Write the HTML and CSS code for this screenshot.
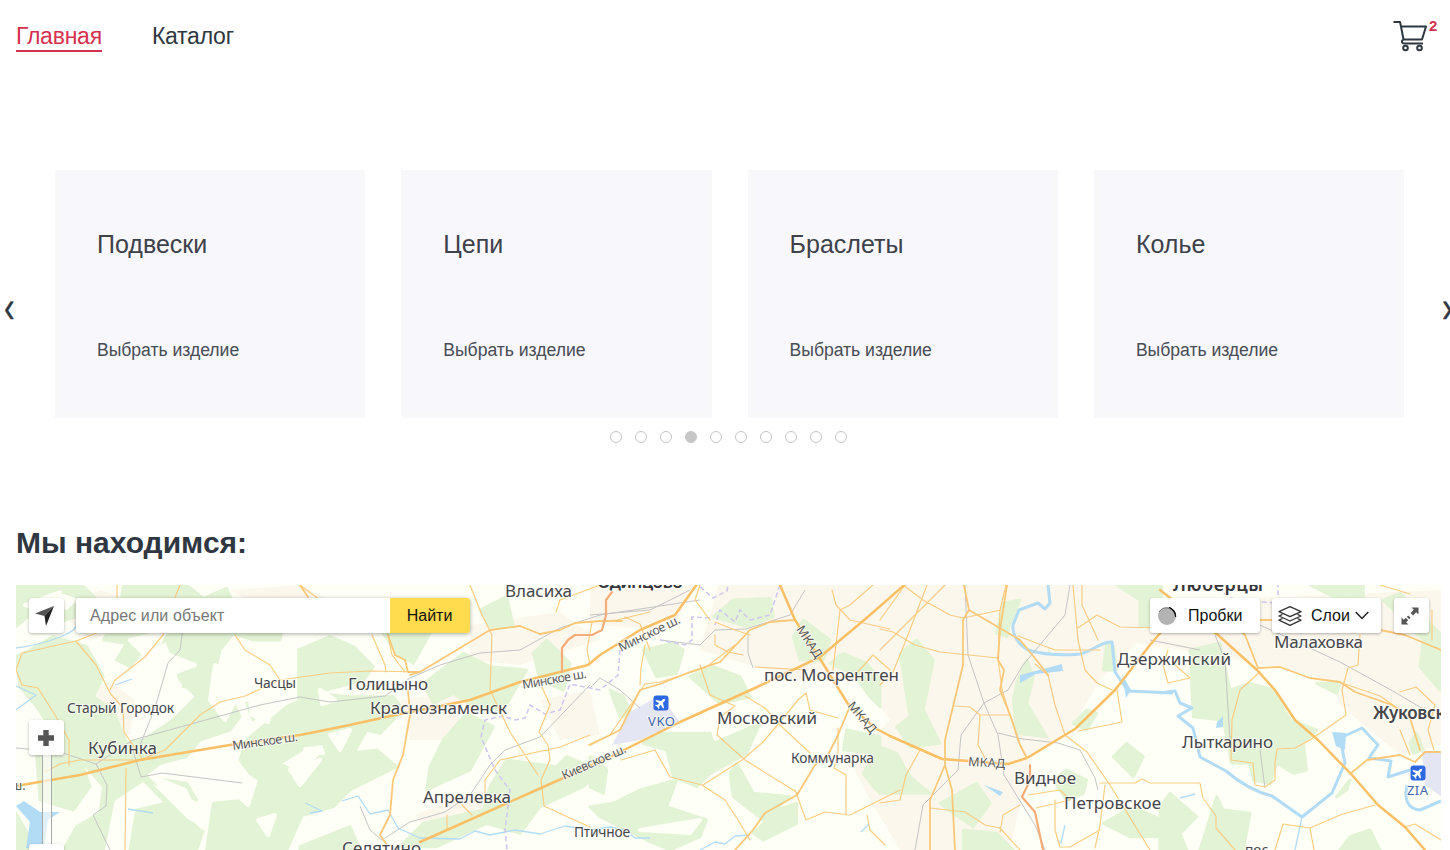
FILE: index.html
```html
<!DOCTYPE html>
<html lang="ru">
<head>
<meta charset="utf-8">
<title>Главная</title>
<link rel="stylesheet" href="styles.css">
</head>
<body>
<header class="header">
  <nav class="nav">
    <a class="nav-link active">Главная</a>
    <a class="nav-link">Каталог</a>
  </nav>
  <a class="cart">
    <svg width="36" height="32" viewBox="0 0 36 32" fill="none" stroke="#2f3742" stroke-width="2" stroke-linejoin="round"><path d="M.5 2H7l1 4.500L10.500 19.500H29L33 6.500H8M10.500 19.500C8 20.500 8.500 23.500 11 23.500H30"/><circle cx="12.500" cy="28" r="2.300"/><circle cx="26.500" cy="28" r="2.300"/></svg>
    <span class="cart-count">2</span>
  </a>
</header>

<section class="slider">
  <span class="arrow"><span class="arrow-glyph">‹</span></span>
  <div class="cards">
    <article class="card"><h3 class="card-title">Подвески</h3><a class="card-link">Выбрать изделие</a></article>
    <article class="card"><h3 class="card-title">Цепи</h3><a class="card-link">Выбрать изделие</a></article>
    <article class="card"><h3 class="card-title">Браслеты</h3><a class="card-link">Выбрать изделие</a></article>
    <article class="card"><h3 class="card-title">Колье</h3><a class="card-link">Выбрать изделие</a></article>
  </div>
  <span class="arrow"><span class="arrow-glyph">›</span></span>
</section>
<div class="dots">
  <i class="dot"></i><i class="dot"></i><i class="dot"></i><i class="dot on"></i><i class="dot"></i><i class="dot"></i><i class="dot"></i><i class="dot"></i><i class="dot"></i><i class="dot"></i>
</div>

<h2 class="heading">Мы находимся:</h2>

<section class="map">
<svg class="map-canvas" width="1425" height="265" viewBox="16 585 1425 265">
  <rect class="land" x="16" y="585" width="1425" height="265"/>
  <!-- built-up areas -->
  <g class="urban">
    <path d="M60 612L100 590L135 600L130 625L90 640ZM75 690L110 682L135 700L130 735L80 745L60 720ZM230 590L300 585L330 600L290 625ZM400 700L470 690L450 740L410 740ZM470 625L560 612L600 640L520 665L470 660ZM415 815L480 790L500 805L430 835ZM540 700L590 690L600 735L560 740ZM590 580H700L670 630L590 625ZM700 650L720 580L1150 580L1140 640L1100 680L1070 730L1030 760L1010 850H900L870 800L850 760L890 720L860 680L800 680ZM1120 640L1210 600L1441 590V745L1400 755L1340 705L1330 680L1240 660L1180 650Z"/>
  </g>
  <!-- forests and parks -->
  <g class="green">
    <g transform="translate(0 510) scale(.33333)">
      <path d="M48 225H245L285 262L230 320L150 345L95 310L48 350ZM370 225H560L610 265L680 235L720 330L860 300L840 390L760 390L700 370L660 420L640 510L690 560L720 620L690 660L600 690L560 740L480 760L430 800L560 820L590 870L540 850L440 810L560 930L610 960L590 1020H390L410 900L500 880L430 810L340 870L310 1020H190L230 950L300 910L310 830L260 770L200 740L150 650L110 590L60 530L48 440L90 420L160 380L260 410L310 500L280 560L340 600L380 700L430 690L520 630L590 560L540 510L500 390L430 420L390 470L350 450L380 400L310 390L360 300Z"/>
      <path d="M600 380L560 400L550 530L620 540L590 620L680 650L700 610L660 560L650 460ZM720 750L740 690L860 590L905 570V720L840 760L905 800V920L860 1020H620L640 880L740 870L780 810L750 790ZM48 910L110 1020H48ZM110 740H240L270 830L220 900L120 870ZM740 580L800 560L760 630Z"/>
    </g>
    <g transform="translate(300 580) scale(.33333)">
      <path d="M-4 210L90 170L160 200L220 260L190 300L40 340L150 350L280 350L310 390L240 460L200 450L150 540L90 550L70 490L-4 500ZM250 160H390L340 250L290 220ZM370 310L490 220L570 260L680 270L610 390L520 380L460 340L400 370ZM60 530L230 510L290 560L150 630L100 680L-4 710V590ZM430 480L500 400L580 440L510 570L380 630L390 560ZM570 620L620 540L770 560L800 530L900 570L850 620L720 680L660 760L560 730L410 800H300L370 730L550 690ZM700 220L740 180L810 250L790 330L720 300ZM540 90L620 50L640 140L570 140ZM0 800L150 740L180 810H0Z"/>
    </g>
    <g transform="translate(590 580) scale(.33333)">
      <path d="M370 110L430 60L540 55L550 110L470 140ZM160 210L250 190L280 210L260 280L200 290ZM300 290L370 260L450 290L480 350L390 370ZM210 460L360 460L370 490L510 430L470 520L360 580L320 620L250 590L230 510L160 490ZM420 580L440 550L490 640L600 650L520 720L430 650ZM0 680L70 670L150 630L260 600L230 680L350 720L330 770L240 810L170 780L30 710ZM610 170L640 120L720 180L700 240L630 240ZM720 250L760 220L830 250L870 300V380L840 350L790 280ZM770 450L870 470L870 520L760 510ZM820 580L870 500V640L850 620ZM60 330L100 350L130 410L90 410ZM0 530L50 570L40 640L0 620ZM560 690L620 670L620 730L520 780L490 760Z"/>
    </g>
    <g transform="translate(880 580) scale(.33333)">
      <path d="M60 220L110 180L160 240L130 390L180 490L90 500L50 440L90 410ZM370 70L420 60L390 130L380 170L350 160ZM410 310L440 240L460 290L440 370L500 470L410 460L400 360ZM180 670L290 610L330 670L280 740L220 700ZM0 500L50 520L90 590L150 640L0 640ZM740 490L790 530L760 590L700 530ZM620 390L650 400L620 450L580 430ZM520 600L560 570L620 600L610 640L560 660ZM670 730L760 680L845 720V770L750 770ZM680 190L700 200L710 270L670 270ZM710 15H845V140H780V60ZM250 750L350 760L400 810H250Z"/>
    </g>
    <g transform="translate(1160 580) scale(.33333)">
      <path d="M0 60H50V150H0ZM90 210L180 190L210 330L270 310L340 330L390 420L470 450L430 490L440 570L400 580L350 550L330 610L280 600L270 550H215L190 420L100 410ZM450 15H610V50L540 60ZM670 60L720 40L840 160V330L780 260L790 180L720 110ZM470 310L540 310L530 340ZM0 680L30 640L110 710L60 760L80 810H0ZM170 650L190 690L270 700L250 810H120ZM570 770L630 750L660 810H540ZM750 490L770 460L790 510L760 520ZM530 650L570 600L560 630Z"/>
    </g>
  </g>
  <!-- clearings inside forests -->
  <g class="glade">
    <path d="M25 605L60 592L50 612ZM130 640L165 632L150 660ZM215 665L245 680L225 720L210 700ZM150 775L185 790L203 828L180 805ZM330 735L350 730L340 750ZM380 745L400 740L395 755ZM235 640L265 655L250 665ZM640 830L700 820L690 833ZM290 770L320 760L300 785ZM250 700L275 690L268 722L252 715ZM232 790L255 783L248 805ZM60 595L75 600L66 608ZM320 690L335 700L322 704ZM258 820L275 815L268 835ZM170 655L195 665L176 672Z"/>
  </g>
  <path class="airport" d="M612 745L630 712L655 698L668 706L680 722L640 740ZM1422 752H1441V796L1425 785Z"/>
  <!-- rivers and ponds -->
  <path class="lake" d="M16 806L24 801L40 812H60L48 820L44 848H26L30 822ZM1332 732L1346 733L1345 750L1336 746ZM1217 722L1223 716V727L1216 728ZM1020 675L1062 664L1063 671L1036 674L1020 683ZM1122 674L1131 690L1126 698ZM984 785L1003 792L1000 796Z"/>
  <g class="river thin">
    <path d="M16 648Q40 645 60 637T76 622M16 686L36 695L16 710M115 685L132 679M128 809L153 813M305 803L322 811L310 813M342 801L358 796L370 814L388 810L398 828L420 838L460 839L475 831L490 835L515 830L540 834L565 826L590 830L610 827L625 830L635 838L650 838M700 850L715 842L725 844L735 836L750 835"/>
    <path d="M1302 817L1295 850M1065 825L1061 843L1057 840M1180 798L1195 794M861 832L869 824"/>
  </g>
  <g class="river">
    <path d="M1048 585L1050 603L1045 609L1038 603L1019 610L1013 625Q1012 640 1028 650C1045 655 1060 656 1080 654C1095 650 1102 641 1112 642L1115 672L1128 691L1173 693M1160 693L1175 691L1180 703L1192 708L1178 716L1193 728L1200 757L1226 771Q1248 790 1272 796L1302 817L1332 793L1345 763L1340 738L1362 728L1378 745L1369 758L1391 761L1388 777L1410 770"/>
    <path d="M1407 785Q1402 808 1420 810L1441 801"/>
  </g>
  <!-- railways -->
  <g class="rail">
    <path d="M183 628L180 650L168 663L155 708L140 745M16 748L60 752L96 764L133 740L260 705L300 697M130 740L141 777L162 773L242 783M96 764L107 785L106 806L93 815L110 850M300 697L330 702L385 696L410 678L440 665L480 653L520 650L560 628L600 615L700 600M360 806L370 830L382 840L410 822L445 812L470 795L490 765L505 750L540 737L590 685"/>
    <path d="M590 688L600 678L620 690L640 708M590 615L650 610L690 590M660 640L700 645L715 630L746 629L790 615L805 590M748 630V653L753 668M965 585L968 655L984 703L1008 690L1023 665L1065 615L1070 585M984 703L961 735L958 770L923 805L915 850M984 703L998 735L1004 775L1035 825L1045 850M998 733L1023 739L1058 743L1080 750L1095 778L1098 790M1215 635L1225 660L1230 740M1260 625L1340 662L1391 690L1425 710M1150 640L1200 650M1260 750L1265 788"/>
  </g>
  <path class="border-line" d="M700 587L713 598L727 591L728 585M780 585L770 615L750 620L740 610L735 622L720 610L715 625M710 618L692 617V640L685 645L660 640M620 650L618 675L600 690L570 684L560 710L545 714L530 705L525 718L515 720L503 716L485 720L481 737L495 770L510 790L505 830L507 850M1210 585L1235 600L1278 603V585"/>
  <!-- secondary roads -->
  <g class="road minor">
    <path d="M117 585V625L76 641L22 653L16 670L22 685L38 688L55 715L69 740L69 765M76 641L96 665L110 693L123 708L124 732L143 760M110 690L115 680L145 657L163 635L170 610L180 585M235 635L245 650L270 665L280 680L245 696L220 702L200 715L190 725L165 750L140 760H80L60 764L45 772M126 768L125 850M280 680L330 673L370 671L420 672M300 585L320 600M372 635L385 665L386 672M388 635L392 655L405 672M470 585L482 615L492 635L490 690L510 732L538 775M590 735L560 747L500 760L485 780V800M541 685L550 705L539 732L548 745L550 760L541 780L544 806L570 818L590 827M447 815V830M600 585L560 600L556 612M590 665L587 650L592 622M462 805L472 815"/>
    <path d="M640 685L641 668L645 645M588 745L610 735L645 684L660 682L705 668L735 645M715 622L735 630L750 635M625 617L640 624L650 650M700 665L710 695L735 706L720 717L717 735L745 760L798 793M745 696L765 708L780 725L810 753M703 785L742 760L762 743L775 728L798 700L806 693L810 710L838 718M700 585L695 600L710 620M590 622L617 620L650 612M621 760L655 750L670 777L702 785L725 800L738 820L750 840M715 635V645L728 652L743 655M755 667L806 670M832 590L836 605L850 620L890 629M833 670L840 610L850 605L873 585M855 675L873 655L890 670M795 790L806 820L825 812L850 815L880 800L900 790M838 728V754L834 768L846 775L846 815M867 815L870 830L885 845"/>
    <path d="M880 629L893 632L915 645L940 652L998 658L1000 610L1006 585M905 585L880 620M945 585L880 650M880 685L893 672L906 640L927 585M903 585L923 600L950 615L963 618L1001 610M998 658L1002 690L1018 740L1025 755M955 706L970 707L980 715L1010 715M980 715L978 745L985 758M1018 636L1055 650L1100 650M1035 664L1048 675L1055 705L1065 735L1087 752L1110 785L1150 850M1073 585L1078 640L1085 670L1097 683L1112 690M1082 585V605L1098 640M1078 628L1097 615L1120 627L1160 628M1117 690L1122 722L1078 731M1028 795L1060 790L1070 800L1036 808M1100 783H1135L1142 779L1150 783H1200L1203 798L1216 816V828L1235 850M1105 785L1100 825L1095 848M930 808L965 812L985 825L1000 828L1020 850M920 750L906 775L900 800L880 803M1000 832L1003 815L1020 805M1055 800V830L1060 847L1070 847L1100 830"/>
    <path d="M1168 650L1163 665L1168 683L1190 678L1175 665M1260 672L1240 690L1232 720L1231 760L1253 763L1255 785L1265 787L1275 780V763L1277 749L1295 748L1310 740L1346 715L1342 690L1348 668L1358 665L1360 635M1342 683L1380 696L1400 710M1400 730L1410 755M1432 610L1432 640M1400 692L1416 687L1435 705L1428 730L1434 750M1375 805L1340 815L1310 828L1283 824L1275 850M1310 828L1314 850M1380 585L1410 594M1405 827L1415 824L1441 840"/>
  </g>
  <!-- trunk roads -->
  <g class="road major">
    <path class="highway" d="M16 786L80 775L140 760L230 745L300 735L345 726L400 714L470 700L520 682L588 665L600 655L640 630L675 615L700 580M420 842L447 830L541 788L610 757L680 722L755 688L820 657L870 615L910 580"/>
    <path d="M408 690L410 715L403 755L393 780L390 815L380 835L387 845M410 675L420 672L490 630L520 626L540 634L560 630L575 623L600 621L622 621M300 585L308 597M388 635L395 655L405 660L408 672L420 672M590 745L620 730L640 690L660 684L690 672L720 662L750 630L770 622L795 620"/>
    <path class="highway" d="M780 585L795 620L822 662L848 704L875 728L890 736L942 759L1008 764L1027 758L1075 729L1115 690L1150 645L1180 610"/>
    <path d="M850 706L838 735L828 755L815 765L797 795L765 813L753 830L735 850M964 585L969 610L963 620V665L945 740L945 765L930 800V850M969 610L1020 640L1038 662L1048 675M945 765L952 790L955 850M1007 585L1000 630L998 660L1004 670L1000 690L1012 720L1020 745L1027 758"/>
    <path class="highway" d="M1160 590L1218 635L1257 670L1275 690L1295 720L1318 740L1352 775L1378 805L1405 827L1425 850"/>
    <path d="M1350 774L1367 760L1400 755L1415 762L1425 752L1441 752M1218 610L1245 635L1258 668L1280 667L1310 678L1340 682L1355 692L1392 705L1410 718L1420 750M1240 620L1290 620M1380 630L1405 635L1441 650"/>
  </g>
  <path class="road orange" d="M562 672V648L568 640L575 635H592L602 630L606 615V600L612 592M1030 765V780L1022 797L1035 812L1043 850"/>
  <!-- place names -->
  <g class="labels">
    <text x="505" y="597" textLength="67">Власиха</text>
    <text class="town" x="597" y="588" textLength="86">Одинцово</text>
    <text class="town" x="1173" y="591" textLength="90">Люберцы</text>
    <text class="small" x="254" y="688" textLength="42">Часцы</text>
    <text x="348" y="690" textLength="80">Голицыно</text>
    <text x="370" y="714" textLength="137">Краснознаменск</text>
    <text class="small" x="67" y="713" textLength="107">Старый Городок</text>
    <text x="88" y="754" textLength="69">Кубинка</text>
    <text x="423" y="803" textLength="88">Апрелевка</text>
    <text x="342" y="854" textLength="79">Селятино</text>
    <text class="small" x="574" y="837" textLength="56">Птичное</text>
    <text x="717" y="724" textLength="100">Московский</text>
    <text x="764" y="681" textLength="135">пос. Мосрентген</text>
    <text class="small" x="791" y="763" textLength="83">Коммунарка</text>
    <text x="1014" y="784" textLength="62">Видное</text>
    <text x="1064" y="809" textLength="97">Петровское</text>
    <text x="1117" y="665" textLength="114">Дзержинский</text>
    <text x="1274" y="648" textLength="89">Малаховка</text>
    <text x="1182" y="748" textLength="91">Лыткарино</text>
    <text class="zhuk" x="1373" y="719" textLength="94">Жуковский</text>
    <text class="small" x="1245" y="855">пос.</text>
    <text class="street" x="11" y="790">ш.</text>
    <text class="street" transform="translate(233 750) rotate(-8)" textLength="66">Минское ш.</text>
    <text class="street" transform="translate(523 689) rotate(-10)" textLength="65">Минское ш.</text>
    <text class="street" transform="translate(621 652) rotate(-26)" textLength="67">Минское ш.</text>
    <text class="street" transform="translate(564 780) rotate(-24)" textLength="69">Киевское ш.</text>
    <text class="street" transform="translate(796 629) rotate(57)" textLength="36">МКАД</text>
    <text class="street" transform="translate(847 706) rotate(50)" textLength="37">МКАД</text>
    <text class="street" transform="translate(968 766) rotate(3)" textLength="37">МКАД</text>
    <text class="code" x="648" y="726" textLength="27">VKO</text>
    <text class="code" x="1407" y="795" textLength="21">ZIA</text>
  </g>
  <g class="plane" transform="translate(661 703)"><rect x="-7.500" y="-7.500" width="15" height="15" rx="3"/><path transform="rotate(45)" d="M0-6L1.300-4V-1.500L5.500 1.300V2.500L1.300 1.500V4L3 5.300V6L0 5.300L-3 6V5.300L-1.300 4V1.500L-5.500 2.500V1.300L-1.300-1.500V-4Z"/></g>
  <g class="plane" transform="translate(1418 773)"><rect x="-7.500" y="-7.500" width="15" height="15" rx="3"/><path transform="rotate(45)" d="M0-6L1.300-4V-1.500L5.500 1.300V2.500L1.300 1.500V4L3 5.300V6L0 5.300L-3 6V5.300L-1.300 4V1.500L-5.500 2.500V1.300L-1.300-1.500V-4Z"/></g>
</svg>

<div class="controls">
  <span class="btn square locate"><svg width="20" height="20" viewBox="0 0 20 20"><path fill="#555" d="M19 0L0 7.500L9.500 10Z"/><path fill="#222" d="M19 0L9.500 10L11 20Z"/></svg></span>
  <div class="search"><span class="search-field">Адрес или объект</span><span class="search-btn">Найти</span></div>
  <span class="btn traffic"><svg width="20" height="20" viewBox="0 0 20 20"><circle cx="10" cy="10" r="9" fill="#b3b3b3"/><path d="M2 6A9 9 0 0 1 18.500 11" fill="none" stroke="#777" stroke-width="1"/><path d="M12 1.300A9 9 0 0 1 18.700 11Q18 5 12 1.300Z" fill="#111" stroke="#111"/></svg>Пробки</span>
  <span class="btn layers"><svg width="24" height="20" viewBox="0 0 24 20" fill="none" stroke="#333" stroke-width="1.300" stroke-linejoin="round"><path d="M12 .7L23 5.700L12 10.700L1 5.700ZM4.500 8.300L1 10L12 15L23 10L19.500 8.300M4.500 12.500L1 14.200L12 19.300L23 14.200L19.500 12.500"/></svg>Слои<svg class="chev" width="14" height="9" viewBox="0 0 14 9"><path d="M.7 1L7 7.500L13.300 1" fill="none" stroke="#222" stroke-width="1.500"/></svg></span>
  <span class="btn square expand"><svg width="18" height="18" viewBox="0 0 18 18" fill="#555"><path d="M10.500 .5H17.500V7.500L15.200 5.200L12 8.400L9.600 6L12.800 2.800ZM7.500 17.500H.5V10.500L2.800 12.800L4.800 10.800L7.200 13.200L5.200 15.200ZM5.800 9.800L7.200 8.400L9.600 10.800L8.200 12.200Z"/></svg></span>
</div>
<div class="zoom">
  <span class="btn square"><svg width="18" height="18" viewBox="0 0 18 18"><path d="M6.300 1h5.400v5.300H17v5.400h-5.300V17H6.300v-5.300H1V6.300h5.300Z" fill="#555"/></svg></span>
  <span class="track"></span>
  <span class="btn square"></span>
</div>
</section>
</body>
</html>
```

FILE: styles.css
```css
* { box-sizing: border-box; }
body {
  margin: 0;
  height: 850px;
  overflow: hidden;
  background: #fff;
  color: #2f3742;
  font-family: "Liberation Sans", Arial, sans-serif;
}
.header {
  display: flex;
  justify-content: space-between;
  height: 170px;
  padding: 20px 12px 0 16px;
}
.nav { display: flex; gap: 50px; align-items: flex-start; }
.nav-link {
  padding-top: 2px;
  font-size: 23px;
  line-height: 28px;
  letter-spacing: -.24px;
}
.nav-link.active {
  color: #d6304f;
  border-bottom: 2px solid #d6304f;
}
.cart { display: flex; align-items: flex-start; }
.cart-count {
  color: #d6304f;
  font-size: 15px;
  font-weight: bold;
  line-height: 12px;
  width: 9px;
}

.slider {
  display: flex;
  align-items: center;
  height: 248px;
  padding-left: 4px;
}
.arrow {
  flex: none;
  width: 51px;
  font-size: 32px;
  line-height: 32px;
}
.arrow-glyph {
  display: inline-block;
  transform: translateY(13px) scaleY(1.4);
  -webkit-text-stroke: .3px;
}
.cards { display: flex; flex: none; gap: 36px; width: 1387px; }
.card {
  width: 310.300px;
  height: 248px;
  padding: 53px 36px 0;
  border: 6px solid #f8f8fa;
  background: #f7f7fc;
}
.card-title {
  margin: 0 0 76px;
  font-size: 25px;
  font-weight: normal;
  line-height: 30px;
  color: #3d414a;
}
.card-link {
  display: block;
  font-size: 17.600px;
  line-height: 30px;
  letter-spacing: -.03px;
  color: #484c55;
}
.dots {
  display: flex;
  gap: 13px;
  padding: 13px 0 0 610px;
}
.dot {
  width: 12px;
  height: 12px;
  border: 1px solid #c6c6c6;
  border-radius: 50%;
}
.dot.on { background: #c6c6c6; }

.heading {
  margin: 82px 0 0 16px;
  height: 60px;
  font-size: 30px;
  line-height: 35px;
}

.map {
  position: relative;
  width: 1425px;
  height: 265px;
  margin-left: 16px;
  overflow: hidden;
}
.map-canvas { display: block; }
.land { fill: #fefff6; }
.urban { fill: #fcf7ed; }
.green { fill: #e3f3d5; stroke: #e3f3d5; stroke-width: 9; stroke-linejoin: round; }
.glade { fill: #fefff6; stroke: #fefff6; stroke-width: 4; stroke-linejoin: round; }
.airport { fill: #e4e6f3; }
.lake { fill: #b2dcf6; }
.river { fill: none; stroke: #b2dcf6; stroke-width: 3; stroke-linejoin: round; }
.thin { stroke-width: 1.3; }
.rail { fill: none; stroke: #c4c4c6; stroke-width: 1; }
.border-line { fill: none; stroke: #cfc8ee; stroke-width: 1.6; stroke-dasharray: 5 3; }
.road { fill: none; stroke: #fbcd82; stroke-linejoin: round; stroke-linecap: round; }
.minor { stroke-width: 1.2; }
.major { stroke-width: 1.8; stroke: #fbc878; }
.highway { stroke-width: 2.5; stroke: #fbc065; }
.orange { stroke-width: 2.2; stroke: #f8ac78; }
.labels {
  font-family: "Noto Sans", sans-serif;
  font-size: 17px;
  fill: #45454b;
  paint-order: stroke;
  stroke: #fffffb;
  stroke-opacity: .75;
  stroke-width: 2px;
}
.town { font-size: 18px; font-weight: 600; fill: #38383c; }
.zhuk { font-weight: 600; }
.small { font-size: 13.800px; }
.street { font-size: 12.500px; fill: #58585a; }
.code { font-size: 13px; fill: #4262ac; }
.plane rect { fill: #2c68e2; }
.plane path { fill: #fff; }

.controls {
  position: absolute;
  inset: 13px 12px auto 13px;
  display: flex;
  color: #111;
  font-size: 16px;
}
.btn {
  display: flex;
  align-items: center;
  height: 35px;
  background: #fff;
  border-radius: 3px;
  box-shadow: 0 1px 3px rgba(0, 0, 0, .3);
}
.square { width: 35px; justify-content: center; }
.locate, .expand { padding-right: 3px; }
.search {
  display: flex;
  width: 394px;
  height: 35px;
  margin: 0 auto 0 12px;
  line-height: 35px;
  background: #fff;
  border-radius: 3px;
  box-shadow: 0 1px 4px rgba(0, 0, 0, .35);
}
.search-field { flex: 1; padding-left: 14px; color: #777; letter-spacing: .1px; }
.search-btn {
  width: 80px;
  padding-right: 1px;
  text-align: center;
  background: #ffdb4d;
  border-radius: 0 3px 3px 0;
}
.traffic { width: 110px; padding-left: 7px; gap: 11px; }
.layers { width: 109px; margin: 0 13px 0 12px; padding-left: 6px; gap: 9px; }
.layers .chev { margin-left: -4px; }
.zoom {
  position: absolute;
  left: 13px;
  top: 135px;
  display: flex;
  flex-direction: column;
  align-items: center;
}
.zoom .btn { padding-right: 1px; }
.track {
  width: 10px;
  height: 89px;
  border: solid #aaa;
  border-width: 0 1px;
  background: rgba(255, 255, 255, .6);
}
```
